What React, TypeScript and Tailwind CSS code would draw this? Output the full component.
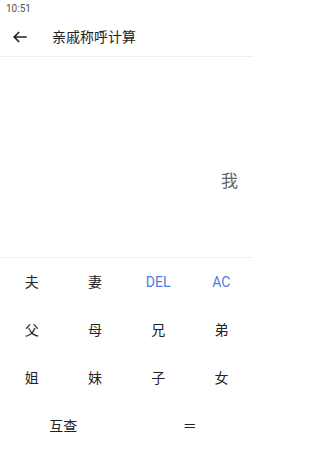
import React from "react";

const font = { fontFamily: 'Roboto, "Noto Sans CJK SC", sans-serif' };

function Key({ label, blue, span }: { label: string; blue?: boolean; span?: boolean }) {
  return (
    <div
      className={`flex h-[48px] items-center justify-center text-[14px] ${span ? "col-span-2" : ""} ${
        blue ? "text-[#4a80e0]" : "text-[#222222]"
      }`}
    >
      {label}
    </div>
  );
}

export default function App() {
  return (
    <div className="flex h-[450px] w-[253px] flex-col overflow-hidden bg-white" style={font}>
      <div className="flex h-[18px] items-center pl-[6px] text-[10px] leading-none text-[#555555]">10:51</div>
      <div className="flex h-[39px] items-center border-b border-[#efefef]">
        <svg width="20" height="20" viewBox="0 0 24 24" className="ml-[10px]">
          <path d="M20 12H5M11 6l-6 6 6 6" fill="none" stroke="#222" strokeWidth="2" />
        </svg>
        <span className="ml-[22px] text-[14px] text-[#222222]">亲戚称呼计算</span>
      </div>
      <div className="flex h-[201px] justify-end border-b border-[#f0f0f0] pr-[15px] pt-[112px]">
        <span className="text-[17px] leading-[24px] text-[#666666]">我</span>
      </div>
      <div className="grid grid-cols-4">
        <Key label="夫" />
        <Key label="妻" />
        <Key label="DEL" blue />
        <Key label="AC" blue />
        <Key label="父" />
        <Key label="母" />
        <Key label="兄" />
        <Key label="弟" />
        <Key label="姐" />
        <Key label="妹" />
        <Key label="子" />
        <Key label="女" />
        <Key label="互查" span />
        <Key label="＝" span />
      </div>
    </div>
  );
}
